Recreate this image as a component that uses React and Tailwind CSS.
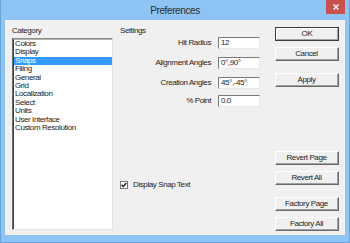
import React from 'react';

const categories = [
  'Colors', 'Display', 'Snaps', 'Filing', 'General', 'Grid',
  'Localization', 'Select', 'Units', 'User Interface', 'Custom Resolution'
];

const settings = [
  { label: 'Hit Radius', value: '12', mt: 'mt-[1px]' },
  { label: 'Alignment Angles', value: '0°,90°', mt: 'mt-[8px]' },
  { label: 'Creation Angles', value: '45°,-45°', mt: 'mt-[8px]' },
  { label: '% Point', value: '0.0', mt: 'mt-[6px]' },
];

function Button({ children, def, className = '' }) {
  return (
    <div className={`h-[14px] w-[64px] flex items-center justify-center bg-[#f0f0f0] border ${def ? 'border-[#3c3c3c]' : 'border-t-white border-l-white border-r-[#696969] border-b-[#696969]'} ${className}`}>
      <div className={`w-full h-full flex items-center justify-center ${def ? 'border border-t-white border-l-white border-r-[#a0a0a0] border-b-[#a0a0a0]' : 'border-r border-b border-r-[#a0a0a0] border-b-[#a0a0a0]'}`}>
        {children}
      </div>
    </div>
  );
}

export default function App() {
  return (
    <div
      className="w-[350px] h-[243px] bg-[#8dc4f3] border-l border-r border-b border-[#6aa3d8] flex flex-col text-[#1c1c1c] overflow-hidden"
      style={{ fontFamily: '"Liberation Sans", Arial, sans-serif' }}
    >
      {/* title bar */}
      <div className="relative h-[20px] shrink-0 flex items-center justify-center">
        <span className="text-[10px] tracking-[-0.4px] text-[#2b2b2b] mt-[0px]">Preferences</span>
        <div className="absolute right-[4px] top-0 w-[19px] h-[14px] bg-[#c9504d] flex items-center justify-center">
          <svg width="6" height="6" viewBox="0 0 6 6">
            <path d="M0.5 0.5 L5.5 5.5 M5.5 0.5 L0.5 5.5" stroke="white" strokeWidth="1.4" />
          </svg>
        </div>
      </div>

      {/* client */}
      <div className="mx-[4px] h-[215px] shrink-0 bg-[#f0f0f0] flex pl-[7px] pr-[6px] text-[8px] tracking-[-0.4px]">
        {/* category column */}
        <div className="w-[101px] flex flex-col">
          <div className="h-[10px] mt-[6px] leading-[10px]">Category</div>
          <div className="mt-[2px] h-[192px] bg-white border border-t-[#8a8a8a] border-l-[#6a6a6a] border-r-[#e4e4e4] border-b-[#e4e4e4] pt-[0px]">
            <div className="border-l border-t border-l-[#404040] border-t-[#b0b0b0] h-full pt-[0px]">
              {categories.map((c) => (
                <div
                  key={c}
                  className={`h-[8.4px] leading-[8.4px] pl-[1px] ${c === 'Snaps' ? 'bg-[#3399ff] text-white' : ''}`}
                >
                  {c}
                </div>
              ))}
            </div>
          </div>
        </div>

        {/* settings column */}
        <div className="flex-1 flex flex-col ml-[7px]">
          <div className="h-[10px] mt-[6px] leading-[10px]">Settings</div>
          {settings.map((s) => (
            <div key={s.label} className={`flex items-center ${s.mt}`}>
              <div className="w-[91px] text-right">{s.label}</div>
              <div className="ml-[7px] w-[42px] h-[12px] bg-white border border-t-[#7a7a7a] border-l-[#7a7a7a] border-r-[#e8e8e8] border-b-[#e8e8e8] flex items-center pl-[2px] leading-none">
                {s.value}
              </div>
            </div>
          ))}
          <div className="flex items-center mt-[72px]">
            <div className="w-[8px] h-[8px] bg-white border border-[#7a7a7a] flex items-center justify-center">
              <svg width="6" height="6" viewBox="0 0 6 6">
                <path d="M0.6 2.8 L2.3 4.6 L5.4 1" stroke="#111" strokeWidth="1.3" fill="none" />
              </svg>
            </div>
            <span className="ml-[5px]">Display Snap Text</span>
          </div>
        </div>

        {/* buttons column */}
        <div className="w-[64px] flex flex-col">
          <Button def className="mt-[7px]">OK</Button>
          <Button className="mt-[6px]">Cancel</Button>
          <Button className="mt-[12px]">Apply</Button>
          <Button className="mt-[64px]">Revert Page</Button>
          <Button className="mt-[6px]">Revert All</Button>
          <Button className="mt-[12px]">Factory Page</Button>
          <Button className="mt-[6px]">Factory All</Button>
        </div>
      </div>
    </div>
  );
}
